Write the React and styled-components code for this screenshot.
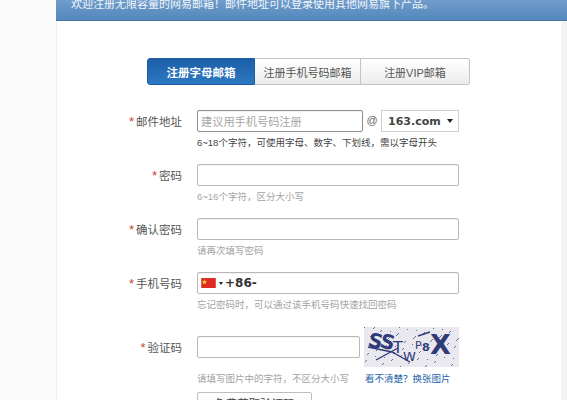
import React from 'react'
import styled, { createGlobalStyle } from 'styled-components'

const CJK = `"Liberation Sans", "Noto Sans CJK SC", sans-serif`

const GlobalStyle = createGlobalStyle`
    html, body {
        margin: 0;
        height: 400px;
        overflow: hidden;
        background: #fbfbfb;
        font-family: ${CJK};
    }
    * { box-sizing: border-box; }
`

const Banner = styled.div`
    margin-left: 56px;
    height: 21px;
    padding: 0 0 10px 15px;
    display: flex;
    align-items: flex-end;
    background: linear-gradient(180deg, #6f9cca 0%, #5488bd 100%);
    border-bottom: 1px solid #4d769f;
    color: #f2f6fb;
    font-size: 11px;
    line-height: 12px;
    white-space: nowrap;
`

const Card = styled.div`
    margin-left: 56px;
    height: 379px;
    padding: 37px 0 0 90px;
    background: #fff;
    border-left: 1px solid #eeeeee;
    border-right: 6px solid #f3f3f3;
`

const Tabs = styled.div`
    display: flex;
    width: 323px;
    height: 27px;
    border-radius: 3px;
`

const Tab = styled.div`
    width: ${props => props.$w}px;
    display: flex;
    align-items: center;
    justify-content: center;
    font-size: ${props => props.$active ? 11.5 : 11}px;
    color: ${props => props.$active ? '#fff' : '#555'};
    font-weight: ${props => props.$active ? 700 : 400};
    background: ${props => props.$active
        ? 'linear-gradient(180deg, #1c5fa8 0%, #2d78c2 100%)'
        : 'linear-gradient(180deg, #ffffff 0%, #ececec 100%)'};
    border: 1px solid ${props => props.$active ? '#1d5a9f' : '#c4c4c4'};
    border-left-width: ${props => props.$first ? 1 : 0}px;
    border-radius: ${props => props.$first ? '3px 0 0 3px' : props.$last ? '0 3px 3px 0' : '0'};
`

const Form = styled.div`
    margin: 25px 0 0 -90px;
    display: flex;
    flex-direction: column;
`

const Row = styled.div`
    display: flex;
    align-items: ${props => props.$center ? 'center' : 'flex-start'};
    height: ${props => props.$h || 22}px;
`

const Label = styled.div`
    width: 125px;
    margin-right: 15px;
    padding-top: 1px;
    text-align: right;
    font-size: 11.5px;
    line-height: 22px;
    color: #555;
`

const Star = styled.span`
    color: #c8423c;
    font-size: 13px;
    margin-right: 2px;
`

const Field = styled.div`
    width: ${props => props.$w}px;
    height: 22px;
    display: flex;
    align-items: center;
    padding-left: 3px;
    background: #fff;
    border: 1px solid ${props => props.$focus ? '#8f8f8f' : '#b8b8b8'};
    border-radius: 2px;
    box-shadow: inset 0 1px 1px rgba(0, 0, 0, 0.06);
    font-size: 11.2px;
    color: #a6a6a6;
`

const At = styled.span`
    width: 18px;
    text-align: center;
    font-size: 11px;
    line-height: 20px;
    color: #666;
`

const Select = styled.div`
    width: 78px;
    height: 22px;
    display: flex;
    align-items: center;
    justify-content: space-between;
    padding: 0 5px 0 6px;
    border: 1px solid #cfcfcf;
    font-family: "DejaVu Sans", sans-serif;
    font-size: 11px;
    font-weight: 700;
    color: #444;
`

const Caret = styled.span`
    width: 0;
    height: 0;
    border-left: ${props => props.$s}px solid transparent;
    border-right: ${props => props.$s}px solid transparent;
    border-top: ${props => props.$s + 1}px solid #222;
`

const Hint = styled.div`
    margin-left: 140px;
    height: ${props => props.$h || 32}px;
    padding-top: ${props => props.$top || 4}px;
    display: flex;
    font-size: 9.5px;
    line-height: 14px;
    color: ${props => props.$dark ? '#444' : '#a3a3a3'};
    white-space: nowrap;
`

const HintText = styled.span`
    width: 168px;
`

const Dial = styled.span`
    margin-left: 2px;
    font-family: "DejaVu Sans", sans-serif;
    font-size: 12px;
    font-weight: 700;
    color: #333;
`

const Flag = styled.svg`
    width: 15px;
    height: 10px;
    margin-right: 3px;
    flex: none;
`

const CaptchaImage = styled.svg`
    width: 95px;
    height: 40px;
    margin-left: 4px;
    flex: none;
`

const CaptchaLink = styled.a`
    color: #1d5fa8;
`

const SendButton = styled.div`
    margin-left: 140px;
    width: 115px;
    height: 22px;
    display: flex;
    align-items: center;
    justify-content: center;
    background: linear-gradient(180deg, #fff 0%, #f0f0f0 100%);
    border: 1px solid #bdbdbd;
    border-radius: 2px;
    font-size: 11.5px;
    color: #444;
`

const Spacer = styled.div`
    height: ${props => props.$h}px;
`

// speckle for the captcha background
const dots = Array.from({ length: 90 }, (_, i) => ({
    x: (i * 37) % 95,
    y: (i * 23 + (i % 7) * 5) % 40,
}))

const Captcha = () => (
    <CaptchaImage viewBox="0 0 95 40">
        <rect width="95" height="40" fill="#e9e8ee" />
        {dots.map((d, i) => (
            <rect key={i} x={d.x} y={d.y} width="1" height="1" fill="#6a6f95" />
        ))}
        <g fill="#2f3a78" fontFamily="'DejaVu Sans', sans-serif" fontWeight="700">
            <text x="3" y="19" fontSize="20" transform="rotate(14 3 19)">S</text>
            <text x="15" y="20" fontSize="20" transform="rotate(14 15 20)">S</text>
            <text x="29" y="26" fontSize="16" fontWeight="400">T</text>
            <text x="39" y="34" fontSize="13" fontWeight="400">W</text>
            <text x="51" y="22" fontSize="11" fontWeight="400">P</text>
            <text x="58" y="24" fontSize="11">8</text>
            <text x="66" y="27" fontSize="27">X</text>
        </g>
        <path d="M4 20 L28 25 L46 35 M12 33 L34 21 M54 9 L66 5" stroke="#2f3a78" strokeWidth="1.4" fill="none" />
    </CaptchaImage>
)

const App = () => {
    return (
        <>
            <GlobalStyle />
            <Banner>欢迎注册无限容量的网易邮箱！邮件地址可以登录使用其他网易旗下产品。</Banner>
            <Card>
                <Tabs>
                    <Tab $w={108} $active $first>注册字母邮箱</Tab>
                    <Tab $w={106}>注册手机号码邮箱</Tab>
                    <Tab $w={109} $last>注册VIP邮箱</Tab>
                </Tabs>
                <Form>
                    <Row>
                        <Label><Star>*</Star>邮件地址</Label>
                        <Field $w={166} $focus>建议用手机号码注册</Field>
                        <At>@</At>
                        <Select>163.com<Caret $s={3} /></Select>
                    </Row>
                    <Hint $dark>6~18个字符，可使用字母、数字、下划线，需以字母开头</Hint>

                    <Row>
                        <Label><Star>*</Star>密码</Label>
                        <Field $w={262} />
                    </Row>
                    <Hint>6~16个字符，区分大小写</Hint>

                    <Row>
                        <Label><Star>*</Star>确认密码</Label>
                        <Field $w={262} />
                    </Row>
                    <Hint>请再次填写密码</Hint>

                    <Row>
                        <Label><Star>*</Star>手机号码</Label>
                        <Field $w={262}>
                            <Flag viewBox="0 0 16 11">
                                <rect width="16" height="11" fill="#de2c22" />
                                <path d="M3.5 1.5 L4.3 3.6 L6.4 3.6 L4.8 4.9 L5.3 7 L3.5 5.8 L1.7 7 L2.2 4.9 L0.8 3.6 L2.8 3.6 Z" fill="#f7d83a" />
                            </Flag>
                            <Caret $s={2} />
                            <Dial>+86-</Dial>
                        </Field>
                    </Row>
                    <Hint>忘记密码时，可以通过该手机号码快速找回密码</Hint>
                    <Spacer $h={1} />

                    <Row $h={40} $center>
                        <Label><Star>*</Star>验证码</Label>
                        <Field $w={163} />
                        <Captcha />
                    </Row>
                    <Hint $h={25} $top={5}>
                        <HintText>请填写图片中的字符，不区分大小写</HintText>
                        <CaptchaLink>看不清楚？换张图片</CaptchaLink>
                    </Hint>
                    <SendButton>免费获取验证码</SendButton>
                </Form>
            </Card>
        </>
    )
}

export default App
